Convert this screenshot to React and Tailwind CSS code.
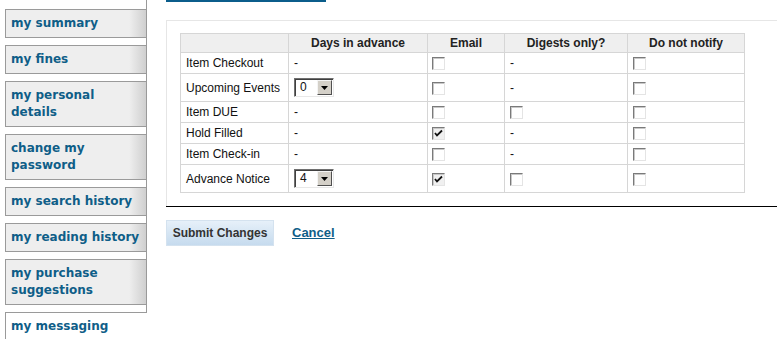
import React from 'react';

const tabs = [
  { label: ['my summary'] },
  { label: ['my fines'] },
  { label: ['my personal', 'details'] },
  { label: ['change my', 'password'] },
  { label: ['my search history'] },
  { label: ['my reading history'] },
  { label: ['my purchase', 'suggestions'] },
  { label: ['my messaging'], active: true },
];

const rows = [
  { name: 'Item Checkout', days: null, email: false, digest: null, none: false },
  { name: 'Upcoming Events', days: '0', email: false, digest: null, none: false },
  { name: 'Item DUE', days: null, email: false, digest: false, none: false },
  { name: 'Hold Filled', days: null, email: true, digest: null, none: false },
  { name: 'Item Check-in', days: null, email: false, digest: null, none: false },
  { name: 'Advance Notice', days: '4', email: true, digest: false, none: false },
];

function Check({ checked }) {
  return (
    <span
      className={`inline-block h-[13px] w-[13px] border border-t-[#7a7a7a] border-l-[#7a7a7a] border-b-[#e4e4e4] border-r-[#e4e4e4] align-middle shadow-[inset_1px_1px_0_#c8c8c8] ${
        checked ? 'bg-[#f0f0f0]' : 'bg-white'
      }`}
    >
      {checked && (
        <svg width="11" height="11" viewBox="0 0 11 11" className="block">
          <path d="M2 5 L4 7.5 L9 2.5" stroke="#111" strokeWidth="1.8" fill="none" />
        </svg>
      )}
    </span>
  );
}

function Select({ value }) {
  return (
    <span className="inline-flex h-[19px] w-[40px] items-center border border-t-[#707070] border-l-[#707070] border-b-[#e8e8e8] border-r-[#e8e8e8] bg-white align-middle shadow-[inset_1px_1px_0_#404040]">
      <span className="flex-1 pl-[5px] text-[12px] leading-[15px]">{value}</span>
      <span className="mr-[1px] flex h-[15px] w-[15px] items-center justify-center border border-t-[#f4f4f4] border-l-[#f4f4f4] border-b-[#505050] border-r-[#505050] bg-[#d4d0c8]">
        <svg width="7" height="4" viewBox="0 0 7 4">
          <path d="M0 0 H7 L3.5 4 Z" fill="#000" />
        </svg>
      </span>
    </span>
  );
}

export default function App() {
  return (
    <div className="flex h-[339px] w-[777px] overflow-hidden bg-white font-['Liberation_Sans',Arial,sans-serif] text-[12px] text-[#111]">
      <div className="w-[147px] shrink-0 border-r border-[#999] pt-[9px]">
        {tabs.map((t, i) => (
          <div
            key={i}
            className={`ml-[5px] mb-[7px] whitespace-nowrap border border-r-0 border-[#9a9a9a] px-[5px] py-[5px] font-['DejaVu_Sans',Verdana,sans-serif] text-[12px] font-bold leading-[17px] text-[#0f5e88] ${
              t.active
                ? 'relative z-10 -mr-px border-b-0 bg-white'
                : 'bg-[linear-gradient(to_right,#eeeeee_0%,#eeeeee_88%,#cfcfcf_100%)]'
            }`}
          >
            {t.label.map((l, j) => (
              <div key={j}>{l}</div>
            ))}
          </div>
        ))}
      </div>

      <div className="flex-1 pl-[19px]">
        <div className="h-[2px] w-[160px] bg-[#0b5d8b]" />
        <div className="mt-[18px] border-l border-t border-[#e6e6e6] pl-[13px] pt-[12px] pb-[13px]">
          <table className="w-[564px] table-fixed border-collapse leading-[16px]">
            <colgroup>
              <col className="w-[108px]" />
              <col className="w-[139px]" />
              <col className="w-[77px]" />
              <col className="w-[123px]" />
              <col className="w-[117px]" />
            </colgroup>
            <thead>
              <tr className="bg-[#efefef]">
                <th className="border border-[#d6d6d6] py-[1px]" />
                <th className="border border-[#d6d6d6] py-[1px] text-center font-bold text-[#222]">Days in advance</th>
                <th className="border border-[#d6d6d6] py-[1px] text-center font-bold text-[#222]">Email</th>
                <th className="border border-[#d6d6d6] py-[1px] text-center font-bold text-[#222]">Digests only?</th>
                <th className="border border-[#d6d6d6] py-[1px] text-center font-bold text-[#222]">Do not notify</th>
              </tr>
            </thead>
            <tbody>
              {rows.map((r) => {
                const py = r.days ? 'py-[4px]' : 'py-[2px]';
                return (
                  <tr key={r.name}>
                    <td className={`border border-[#d6d6d6] px-[5px] ${py} whitespace-nowrap`}>{r.name}</td>
                    <td className={`border border-[#d6d6d6] px-[5px] ${py}`}>
                      {r.days ? <Select value={r.days} /> : '-'}
                    </td>
                    <td className={`border border-[#d6d6d6] px-[4px] ${py}`}>
                      <Check checked={r.email} />
                    </td>
                    <td className={`border border-[#d6d6d6] px-[5px] ${py}`}>
                      {r.digest === null ? '-' : <Check checked={r.digest} />}
                    </td>
                    <td className={`border border-[#d6d6d6] px-[5px] ${py}`}>
                      <Check checked={r.none} />
                    </td>
                  </tr>
                );
              })}
            </tbody>
          </table>
        </div>
        <div className="h-px bg-black" />
        <div className="mt-[13px] flex items-center gap-[18px]">
          <button
            type="button"
            className="h-[26px] w-[108px] border border-[#d4e2ef] bg-[linear-gradient(to_bottom,#e6f0f9,#c6dbee)] text-[12px] font-bold text-[#333]"
          >
            Submit Changes
          </button>
          <a href="#" className="text-[13px] font-bold text-[#0f5e88] underline">
            Cancel
          </a>
        </div>
      </div>
    </div>
  );
}
